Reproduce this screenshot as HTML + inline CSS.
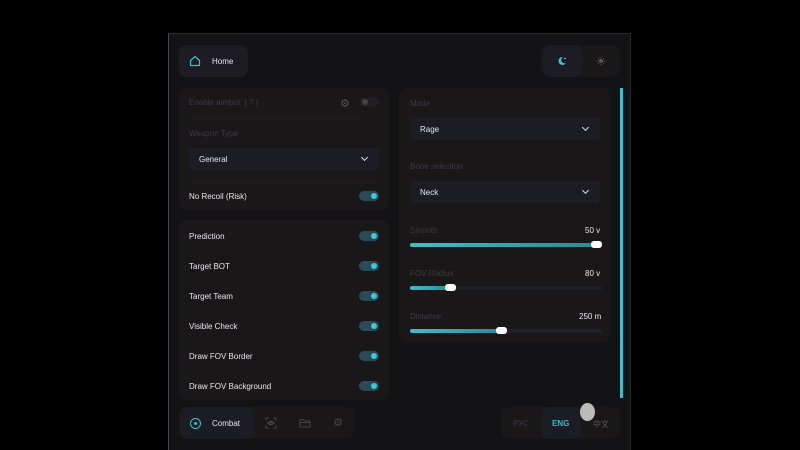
<!DOCTYPE html><html><head><style>
*{box-sizing:border-box;margin:0;padding:0}
body{width:800px;height:450px;background:#000;font-family:"Liberation Sans",sans-serif;position:relative;overflow:hidden;color:#e6e6ea;font-size:8px}
.win{position:absolute;left:168px;top:33px;width:463px;height:417px;background:#131316;border-left:1px solid #4a4550;border-top:1px solid #2a2a30;border-right:1px solid #2a2a30}
.a{position:absolute}
.card{position:absolute;background:#1a1719;border-radius:8px}
.dim{color:#3a3a42}
.tog{position:absolute;width:20px;height:10px;border-radius:5px;background:#2a4a58}
.tog:after{content:"";position:absolute;right:2px;top:2px;width:6px;height:6px;border-radius:50%;background:#3cc8d8}
.sel{position:absolute;background:#1c1c24;border-radius:3px;height:22px}
.chev{position:absolute;right:12px;top:7px;width:5px;height:5px;border-right:1.3px solid #ddd;border-bottom:1.3px solid #ddd;transform:rotate(45deg)}
.track{position:absolute;height:4px;background:#1e2128;border-radius:2px}
.fill{position:absolute;left:0;top:0;height:4px;border-radius:2px;background:linear-gradient(90deg,#3cc0cc,#2a8a96)}
.knob{position:absolute;top:-2px;width:11px;height:7px;border-radius:3px;background:#fff}
</style></head><body>
<div class="win"></div>
<div class="card" style="left:179px;top:45px;width:69px;height:32px;background:#1c1c22"></div>
<svg class="a" style="left:189px;top:55px" width="12" height="12" viewBox="0 0 12 12"><path d="M1.5 5.5L6 1.5L10.5 5.5V10.5H1.5Z" fill="none" stroke="#3cc0cc" stroke-width="1.2" stroke-linejoin="round"/></svg>
<div class="a" style="left:212px;top:57px">Home</div>
<div class="card" style="left:541px;top:45px;width:79px;height:32px;background:#1a1719"></div>
<div class="card" style="left:543px;top:45px;width:40px;height:32px;background:#1c1c24"></div>
<svg class="a" style="left:557px;top:56px" width="10" height="10" viewBox="0 0 10 10"><path d="M6 1A4 4 0 1 0 9 7A3.2 3.2 0 0 1 6 1Z" fill="#3cc8d8"/><circle cx="8" cy="2.5" r="0.9" fill="#3cc8d8"/></svg>
<svg class="a" style="left:596px;top:56px" width="10" height="10" viewBox="0 0 10 10"><circle cx="5" cy="5" r="2.2" fill="#555"/><path d="M5 0.8V2M5 8V9.2M0.8 5H2M8 5H9.2M2 2L2.8 2.8M7.2 7.2L8 8M2 8L2.8 7.2M7.2 2.8L8 2" stroke="#555" stroke-width="0.9"/></svg>

<div class="card" style="left:179px;top:88px;width:210px;height:122px"></div>
<div class="a dim" style="left:189px;top:98px">Enable aimbot &nbsp;[ ? ]</div>
<div class="a" style="left:340px;top:97px;color:#555;font-size:11px">⚙</div>
<div class="a" style="left:359px;top:97px;width:20px;height:10px;border-radius:5px;background:#1e1e24"></div>
<div class="a" style="left:362px;top:99px;width:6px;height:6px;border-radius:50%;background:#444"></div>
<div class="a" style="left:189px;top:118px;width:176px;height:1px;background:#1f1d22"></div>
<div class="a dim" style="left:189px;top:129px">Weapon Type</div>
<div class="sel" style="left:189px;top:148px;width:190px"><span class="a" style="left:10px;top:7px">General</span><span class="chev"></span></div>
<div class="a" style="left:189px;top:182px;width:190px;height:1px;background:#1f1d22"></div>
<div class="a" style="left:189px;top:192px">No Recoil (Risk)</div><div class="tog" style="left:359px;top:191px"></div>

<div class="card" style="left:179px;top:220px;width:210px;height:180px"></div>
<div class="a" style="left:189px;top:232px">Prediction</div><div class="tog" style="left:359px;top:231px"></div>
<div class="a" style="left:189px;top:262px">Target BOT</div><div class="tog" style="left:359px;top:261px"></div>
<div class="a" style="left:189px;top:292px">Target Team</div><div class="tog" style="left:359px;top:291px"></div>
<div class="a" style="left:189px;top:322px">Visible Check</div><div class="tog" style="left:359px;top:321px"></div>
<div class="a" style="left:189px;top:352px">Draw FOV Border</div><div class="tog" style="left:359px;top:351px"></div>
<div class="a" style="left:189px;top:382px">Draw FOV Background</div><div class="tog" style="left:359px;top:381px"></div>

<div class="card" style="left:399px;top:88px;width:211px;height:255px"></div>
<div class="a dim" style="left:410px;top:99px">Mode</div>
<div class="sel" style="left:410px;top:118px;width:190px"><span class="a" style="left:10px;top:7px">Rage</span><span class="chev"></span></div>
<div class="a dim" style="left:410px;top:162px">Bone selection</div>
<div class="sel" style="left:410px;top:181px;width:190px"><span class="a" style="left:10px;top:7px">Neck</span><span class="chev"></span></div>
<div class="a dim" style="left:410px;top:226px">Smooth</div><div class="a" style="left:585px;top:226px">50 v</div>
<div class="track" style="left:410px;top:243px;width:192px"><div class="fill" style="width:186px"></div><div class="knob" style="left:181px"></div></div>
<div class="a dim" style="left:410px;top:269px">FOV Radius</div><div class="a" style="left:585px;top:269px">80 v</div>
<div class="track" style="left:410px;top:286px;width:192px"><div class="fill" style="width:40px"></div><div class="knob" style="left:35px"></div></div>
<div class="a dim" style="left:410px;top:312px">Distance</div><div class="a" style="left:579px;top:312px">250 m</div>
<div class="track" style="left:410px;top:329px;width:192px"><div class="fill" style="width:92px"></div><div class="knob" style="left:86px"></div></div>

<div class="a" style="left:620px;top:88px;width:3px;height:310px;background:#3cc0cc"></div>

<div class="card" style="left:179px;top:407px;width:175px;height:32px"></div>
<div class="card" style="left:180px;top:407px;width:74px;height:32px;background:#1c1c24"></div>
<div class="a" style="left:190px;top:418px;width:11px;height:11px;border-radius:50%;border:1.3px solid #3cc0cc"></div>
<div class="a" style="left:194px;top:422px;width:3px;height:3px;border-radius:50%;background:#3cc0cc"></div>
<div class="a" style="left:212px;top:419px">Combat</div>
<svg class="a" style="left:265px;top:417px" width="12" height="12" viewBox="0 0 12 12" fill="none" stroke="#444" stroke-width="1"><path d="M1 4V1H4M8 1H11V4M11 8V11H8M4 11H1V8"/><path d="M2.5 6Q6 2.5 9.5 6Q6 9.5 2.5 6Z"/><circle cx="6" cy="6" r="1.2"/></svg>
<svg class="a" style="left:299px;top:418px" width="12" height="10" viewBox="0 0 12 10" fill="none" stroke="#444" stroke-width="1"><path d="M1 2V9H11V3H5.5L4.5 1.5H1Z"/><path d="M1 4.5H11"/></svg>
<div class="a" style="left:333px;top:416px;color:#444;font-size:11px">⚙</div>
<div class="card" style="left:501px;top:407px;width:119px;height:32px"></div>
<div class="card" style="left:541px;top:407px;width:40px;height:32px;background:#1c1c24"></div>
<div class="a" style="left:513px;top:419px;color:#3a3a42">РУС</div>
<div class="a" style="left:552px;top:419px;color:#3cb8c8;font-weight:bold">ENG</div>
<div class="a" style="left:593px;top:419px;color:#555;font-family:'Liberation Sans','Noto Sans CJK SC',sans-serif">中文</div>
<div class="a" style="left:580px;top:403px;width:15px;height:18px;border-radius:50%;background:#bbb"></div>
</body></html>
